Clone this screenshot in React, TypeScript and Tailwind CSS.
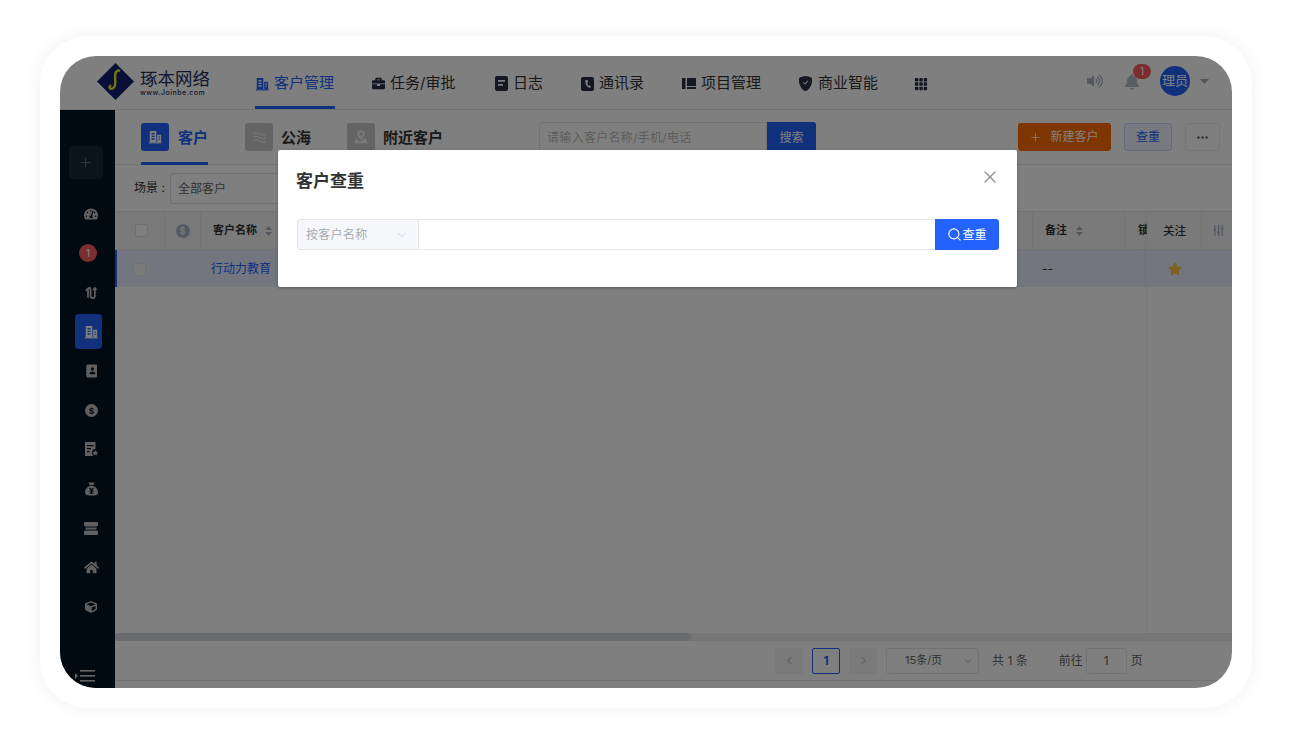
import { ReactNode } from 'react';
import { BsGrid3X3GapFill, BsShieldFillCheck } from 'react-icons/bs';
import { FaBell, FaBriefcase, FaCube, FaHome, FaStar, FaTachometerAlt, FaVolumeUp } from 'react-icons/fa';
import { ChevronDown, ChevronLeft, ChevronRight, Plus, Search, X } from 'lucide-react';

const font = { fontFamily: '"Inter", "Noto Sans CJK SC", sans-serif' };

function BuildingIcon({ size = 16, className = '' }: { size?: number; className?: string }) {
  return (
    <svg width={size} height={size} viewBox="0 0 16 16" fill="currentColor" className={className}>
      <path d="M2 1h7.500v13H2zM4 3.500v1.500h3.500V3.500zM4 6.500V8h3.500V6.500zM4 9.500V11h3.500V9.500z" fillRule="evenodd" />
      <path d="M10.500 5.500H15V14h-4.500zM11.800 7.500v1.200h2V7.500zM11.800 10v1.200h2V10z" fillRule="evenodd" />
      <rect x="1" y="14" width="14.500" height="1.300" />
    </svg>
  );
}

function LogIcon() {
  return (
    <svg width="13" height="15" viewBox="0 0 13 15" fill="currentColor">
      <path fillRule="evenodd" d="M2 0h9a2 2 0 0 1 2 2v11a2 2 0 0 1-2 2H2a2 2 0 0 1-2-2V2a2 2 0 0 1 2-2zM3 4v1.800h7V4zM3 8v1.800h5V8z" />
    </svg>
  );
}

function PhoneBookIcon() {
  return (
    <svg width="13" height="14" viewBox="0 0 13 14" fill="currentColor">
      <path fillRule="evenodd" d="M2 0h9a2 2 0 0 1 2 2v10a2 2 0 0 1-2 2H2a2 2 0 0 1-2-2V2a2 2 0 0 1 2-2zM4.500 3C3.800 6.500 5.500 10 9 11l1-1.800-1.800-1-.8.700C6.800 8 6.300 7 6.200 5.800l1-.6L6.500 3z" />
    </svg>
  );
}

function ProjectIcon() {
  return (
    <svg width="14" height="11" viewBox="0 0 14 11" fill="currentColor">
      <rect x="0" y="0" width="3.500" height="11" rx="0.500" />
      <path d="M5 0h8.200a.8.8 0 0 1 .8.800V8H5z" />
      <rect x="5" y="9" width="9" height="2" />
    </svg>
  );
}

function ExchangeIcon() {
  return (
    <svg width="12" height="13" viewBox="0 0 14 14" fill="none" stroke="currentColor" strokeWidth="2">
      <path d="M3.500 13V3a1.500 1.500 0 0 1 3 0v8a2.500 2.500 0 0 0 5 0V2" />
      <path d="M1 5l2.500-2.500M9.500 4l2-2.500L13.500 4" />
    </svg>
  );
}

function ContactBookIcon() {
  return (
    <svg width="11" height="14" viewBox="0 0 12 14" fill="currentColor">
      <path fillRule="evenodd" d="M1.500 0H11a1 1 0 0 1 1 1v12a1 1 0 0 1-1 1H1.500a1 1 0 0 1-1-1v-2H0V9.800h.5V7.600H0V6.400h.5V4.200H0V3h.5V1a1 1 0 0 1 1-1zM7 3a1.700 1.700 0 1 0 0 3.400A1.700 1.700 0 0 0 7 3zM3.800 10.500h6.400C10.200 8.700 8.800 7.500 7 7.500s-3.200 1.200-3.200 3z" />
    </svg>
  );
}

function DollarIcon() {
  return (
    <svg width="13" height="13" viewBox="0 0 13 13">
      <circle cx="6.500" cy="6.500" r="6.500" fill="currentColor" />
      <text x="6.500" y="9.700" textAnchor="middle" fontSize="9" fontWeight="700" fill="#021322" fontFamily="Liberation Sans">$</text>
    </svg>
  );
}

function FileStarIcon() {
  return (
    <svg width="13" height="14" viewBox="0 0 13 14" fill="currentColor">
      <path fillRule="evenodd" d="M0 0h10.500v7a3.500 3.500 0 0 0-3.500 3.500c0 1.300.5 2.500 1 3.500H0zM2 3v1.300h6.500V3zM2 6v1.300h4V6zM2 9v1.300h2.500V9z" />
      <path d="M10.300 8l.9 1.800 2 .3-1.400 1.400.3 2-1.800-1-1.800 1 .3-2-1.400-1.400 2-.3z" />
    </svg>
  );
}

function MoneyBagIcon() {
  return (
    <svg width="13" height="14" viewBox="0 0 13 14">
      <path fill="currentColor" d="M3.500 0.500h6L8.300 3.200H4.700zM4.500 4h4c2.500 1 4.500 3.500 4.500 6 0 2.500-2 3.500-4 3.500H4C2 13.500 0 12.500 0 10c0-2.500 2-5 4.500-6z" />
      <path stroke="#021322" strokeWidth="1.200" fill="none" d="M4.500 6l2 2 2-2M4.300 9h4.400M4.300 11h4.400M6.500 8v4" />
    </svg>
  );
}

function TicketStackIcon() {
  return (
    <svg width="14" height="13" viewBox="0 0 14 13" fill="currentColor">
      <path d="M1 0h12a1 1 0 0 1 1 1v2.500a1.200 1.200 0 0 0-1 .9H1a1.200 1.200 0 0 0-1-.9V1a1 1 0 0 1 1-1z" />
      <rect x="1.600" y="5.500" width="10.800" height="2" />
      <path d="M1 13h12a1 1 0 0 0 1-1V9.500a1.200 1.200 0 0 1-1-.9H1a1.200 1.200 0 0 1-1 .9V12a1 1 0 0 0 1 1z" />
    </svg>
  );
}

function CollapseIcon() {
  return (
    <svg width="20" height="14" viewBox="0 0 20 14" fill="currentColor">
      <path d="M0 4l3 3-3 3z" />
      <rect x="5" y="1" width="15" height="1.600" />
      <rect x="5" y="6" width="15" height="1.600" />
      <rect x="5" y="11" width="15" height="1.600" />
    </svg>
  );
}

function SortArrows() {
  return (
    <svg width="7" height="10" viewBox="0 0 7 10" fill="#a8abb2" className="shrink-0">
      <path d="M3.500 0L7 4H0zM3.500 10L0 6h7z" />
    </svg>
  );
}

function Logo() {
  return (
    <div className="flex items-center w-[114px] ml-[37px] -mt-[2px] shrink-0">
      <svg width="37" height="37" viewBox="0 0 37 37" className="shrink-0">
        <path d="M18.500 0L37 18.500 18.500 37 0 18.500z" fill="#13206e" />
        <path d="M23 8c-3-1.500-4.500 1-4.800 4-.4 3.500.8 7-.4 11-.6 2.200-3.500 3.800-5 2-.8-1.200.3-2.500 1.400-2" fill="none" stroke="#f0ea14" strokeWidth="2.400" />
      </svg>
      <div className="ml-[6px] pt-[3px] flex flex-col text-[#23305f]">
        <span className="text-[17.500px] leading-[20px] whitespace-nowrap">琢本网络</span>
        <span className="text-[7px] leading-[8px] tracking-[0.500px] font-medium whitespace-nowrap">www.Joinbe.com</span>
      </div>
    </div>
  );
}

function NavItem({ icon, label, active, width }: { icon: ReactNode; label: string; active?: boolean; width: string }) {
  return (
    <div className={`${width} h-full flex items-center gap-[5px] text-[15px] border-b-[3px] shrink-0 pt-[5px] ${active ? 'text-[#2362fb] border-[#2362fb]' : 'text-[#333] border-transparent'}`}>
      <span className={`flex items-center ${active ? 'text-[#2362fb]' : 'text-[#2a2f45]'}`}>{icon}</span>
      <span className="whitespace-nowrap">{label}</span>
    </div>
  );
}

function TopBar() {
  return (
    <div className="h-[54px] bg-white border-b border-[#e6e6e6] flex items-stretch shrink-0">
      <Logo />
      <div className="flex h-full ml-[44px] w-[700px]">
        <div className="w-[117px] pr-[22px] shrink-0 h-full">
          <NavItem icon={<BuildingIcon size={14} />} label="客户管理" active width="w-[80px]" />
        </div>
        <div className="w-[123px] shrink-0 h-full">
          <NavItem icon={<FaBriefcase size={13} />} label="任务/审批" width="w-[86px]" />
        </div>
        <div className="w-[86px] shrink-0 h-full">
          <NavItem icon={<LogIcon />} label="日志" width="w-[50px]" />
        </div>
        <div className="w-[101px] shrink-0 h-full">
          <NavItem icon={<PhoneBookIcon />} label="通讯录" width="w-[66px]" />
        </div>
        <div className="w-[116px] shrink-0 h-full">
          <NavItem icon={<ProjectIcon />} label="项目管理" width="w-[80px]" />
        </div>
        <div className="w-[116px] shrink-0 h-full">
          <NavItem icon={<BsShieldFillCheck size={15} />} label="商业智能" width="w-[82px]" />
        </div>
        <div className="h-full flex items-center pt-[3px] text-[#2a2f45]">
          <BsGrid3X3GapFill size={14} />
        </div>
      </div>
      <div className="ml-auto flex items-center pr-[23px] pb-[3px]">
        <FaVolumeUp size={16} className="text-[#aab2c0]" />
        <div className="relative ml-[21px] mt-[2px]">
          <FaBell size={16} className="text-[#b4bac6]" />
          <span className="absolute -top-[10px] left-[9px] w-[18px] h-[15px] rounded-full bg-[#f95a5a] text-white text-[10px] leading-[15px] text-center">1</span>
        </div>
        <div className="ml-[20px] w-[30px] h-[30px] rounded-full bg-[#2362fb] text-white text-[13px] flex items-center justify-center overflow-hidden whitespace-nowrap">理员</div>
        <svg width="9" height="5" viewBox="0 0 9 5" className="ml-[10px] text-[#aaa]" fill="currentColor"><path d="M0 0h9L4.500 5z" /></svg>
      </div>
    </div>
  );
}

function Sidebar() {
  const items: ReactNode[] = [
    <span className="block pl-[7px]"><FaTachometerAlt size={14} /></span>,
    <span className="w-[18px] h-[18px] ml-[1px] rounded-full bg-[#f95a5a] text-white text-[10px] leading-[18px] text-center block">1</span>,
    <span className="block pl-[7px]"><ExchangeIcon /></span>,
    <div className="w-[27px] h-[35px] ml-[1px] rounded-[4px] bg-[#2362fb] text-white flex items-center justify-center pl-[5px]"><BuildingIcon size={14} /></div>,
    <span className="block pl-[7px]"><ContactBookIcon /></span>,
    <span className="block pl-[7px]"><DollarIcon /></span>,
    <span className="block pl-[7px]"><FileStarIcon /></span>,
    <span className="block pl-[7px]"><MoneyBagIcon /></span>,
    <span className="block pl-[7px]"><TicketStackIcon /></span>,
    <span className="block pl-[7px]"><FaHome size={15} /></span>,
    <span className="block pl-[7px]"><FaCube size={12} /></span>,
  ];
  return (
    <div className="w-[55px] shrink-0 bg-[#021322] flex flex-col items-center relative">
      <div className="mt-[36px] -ml-[4px] w-[34px] h-[33px] rounded-[4px] bg-[#16283a] text-[#6c7682] flex items-center justify-center">
        <Plus size={15} strokeWidth={1.500} />
      </div>
      <div className="mt-[15px] flex flex-col items-center text-[#c0c0c0]">
        {items.map((item, i) => (
          <div key={i} className="h-[39.300px] flex items-center justify-center">{item}</div>
        ))}
      </div>
      <div className="mt-auto mb-[5px] -ml-[5px] text-[#c3c8ce]">
        <CollapseIcon />
      </div>
    </div>
  );
}

function Tab({ icon, label, active, iconBg }: { icon: ReactNode; label: string; active?: boolean; iconBg: string }) {
  return (
    <div className={`h-[55px] flex items-start pt-[13px] border-b-[3px] ${active ? 'gap-[9px] border-[#2362fb] text-[#2362fb] w-[67px]' : 'gap-[8px] border-transparent text-[#333]'}`}>
      <div className={`w-[28px] h-[28px] rounded-[3px] ${iconBg} text-white flex items-center justify-center shrink-0`}>{icon}</div>
      <span className="text-[15px] leading-[30px] font-semibold whitespace-nowrap">{label}</span>
    </div>
  );
}

function Toolbar() {
  return (
    <div className="h-[55px] shrink-0 border-b border-[#e6e6e6] flex pl-[26px] pr-[12px] bg-white">
      <div className="flex gap-[36px]">
        <Tab icon={<BuildingIcon size={14} />} label="客户" active iconBg="bg-[#2362fb]" />
        <div className="ml-[1px]">
          <Tab
            label="公海"
            iconBg="bg-[#c8c8c8]"
            icon={
              <svg width="15" height="11" viewBox="0 0 15 11" fill="none" stroke="currentColor" strokeWidth="1.200" className="opacity-70">
                <path d="M1 2c2-1.500 4-1.500 6.500 0s4.500 1.500 6.500 0M1 5.500c2-1.500 4-1.500 6.500 0s4.500 1.500 6.500 0M1 9c2-1.500 4-1.500 6.500 0s4.500 1.500 6.500 0" />
              </svg>
            }
          />
        </div>
        <Tab
          label="附近客户"
          iconBg="bg-[#c8c8c8]"
          icon={
            <svg width="16" height="16" viewBox="0 0 16 16" fill="currentColor" className="opacity-70">
              <path fillRule="evenodd" d="M8 1a4 4 0 0 0-4 4c0 2.500 4 6 4 6s4-3.500 4-6a4 4 0 0 0-4-4zm0 2.500a1.500 1.500 0 1 1 0 3 1.500 1.500 0 0 1 0-3z" />
              <path d="M3 9.500l-2 5h14l-2-5-1.500 0-4.500 3-4.500-3z" />
            </svg>
          }
        />
      </div>
      <div className="ml-[96px] mt-[12px] flex h-[30px]">
        <div className="w-[228px] border border-[#e6e6e6] rounded-l-[3px] text-[12px] text-[#bbb] leading-[29px] px-[7px] tracking-[0.300px]">请输入客户名称/手机/电话</div>
        <div className="w-[49px] bg-[#2362fb] rounded-r-[3px] text-white text-[12px] flex items-center justify-center pt-[2px]">搜索</div>
      </div>
      <div className="ml-auto mt-[13px] flex h-[28px] gap-[13px]">
        <div className="w-[93px] rounded-[3px] bg-[#ff6a00] text-white text-[12px] flex items-center justify-center gap-[8px] pr-[1px]">
          <Plus size={13} strokeWidth={1.500} />
          <span>新建客户</span>
        </div>
        <div className="w-[48px] rounded-[3px] border border-[#c6d5fb] bg-[#f0f4ff] text-[#2362fb] text-[12px] flex items-center justify-center">查重</div>
        <div className="w-[35px] rounded-[3px] border border-[#ececec] flex items-center justify-center text-[#555]">
          <svg width="11" height="3" viewBox="0 0 11 3" fill="currentColor"><circle cx="1.500" cy="1.500" r="1.200" /><circle cx="5.500" cy="1.500" r="1.200" /><circle cx="9.500" cy="1.500" r="1.200" /></svg>
        </div>
      </div>
    </div>
  );
}

function Filters() {
  return (
    <div className="h-[47px] shrink-0 flex items-center pl-[19px] bg-white border-b border-[#e6e6e6]">
      <span className="text-[12px] text-[#333] w-[36px] whitespace-nowrap">场景 :</span>
      <div className="w-[120px] h-[31px] border border-[#dcdfe6] rounded-[3px] text-[12px] text-[#666] leading-[29px] pl-[7px]">全部客户</div>
    </div>
  );
}

function Table() {
  return (
    <div className="flex-1 flex min-h-0 bg-white">
      <div className="flex-1 min-w-0 overflow-hidden">
        <div className="h-[38px] flex items-center bg-[#f5f5f5] border-b border-[#e6e6e6] text-[11px] font-bold text-[#333]">
          <div className="w-[50px] h-full border-r border-[#e6e6e6] flex items-center pl-[20px] shrink-0">
            <div className="w-[13px] h-[13px] border border-[#dcdfe6] bg-white rounded-[2px]" />
          </div>
          <div className="w-[36px] h-full border-r border-[#e6e6e6] flex items-center justify-center shrink-0">
            <span className="w-[14px] h-[14px] rounded-full bg-[#a9b4c8] text-white text-[9px] leading-[14px] text-center font-normal">$</span>
          </div>
          <div className="w-[831px] h-full flex items-center gap-[8px] pl-[12px] shrink-0 whitespace-nowrap">
            客户名称 <SortArrows />
          </div>
          <div className="w-[93px] h-full border-x border-[#e6e6e6] flex items-center gap-[9px] pl-[12px] shrink-0 whitespace-nowrap">
            备注 <SortArrows />
          </div>
          <div className="pl-[13px] shrink-0 whitespace-nowrap">锁定状态</div>
        </div>
        <div className="h-[37px] flex items-center bg-[#e7edff] border-l-2 border-[#2362fb] text-[12px] pt-[1px]">
          <div className="w-[44px] flex justify-center shrink-0">
            <div className="w-[13px] h-[13px] border border-[#e4e4e4] bg-[#f4f4f4] rounded-[2px]" />
          </div>
          <div className="w-[40px] shrink-0" />
          <div className="w-[831px] pl-[10px] text-[#2362fb] shrink-0">行动力教育</div>
          <div className="pl-[10px] text-[#333]">--</div>
        </div>
      </div>
      <div className="w-[85px] shrink-0 border-l border-[#eeeeee] shadow-[-2px_0_4px_rgba(0,0,0,0.04)] relative bg-white">
        <div className="h-[38px] flex bg-[#f5f5f5] border-b border-[#e6e6e6]">
          <div className="w-[54px] h-full border-r border-[#e6e6e6] flex items-center justify-center text-[11.500px] font-medium text-[#333] pt-[2px]">关注</div>
          <div className="flex-1 flex items-center justify-center pl-[2px]">
            <svg width="11" height="11" viewBox="0 0 11 12" fill="#a9b4c8"><path d="M.8 0h1.400v12H.8zM4.800 0h1.400v12H4.800zM8.800 0h1.400v12H8.800z" /><path d="M0 4h3v2H0zM4 7h3v2H4zM8 3h3v2H8z" /></svg>
          </div>
        </div>
        <div className="h-[37px] bg-[#e7edff] flex">
          <div className="w-[53px] flex items-center justify-center">
            <FaStar size={14} className="text-[#fac23d]" />
          </div>
        </div>
      </div>
    </div>
  );
}

function Pagination() {
  return (
    <div className="h-[40px] shrink-0 flex items-center bg-white border-b border-[#e6e6e6] text-[12px] text-[#666] pl-[660px]">
      <div className="w-[28px] h-[26px] bg-[#f4f4f5] rounded-[2px] flex items-center justify-center text-[#c0c4cc]"><ChevronLeft size={13} /></div>
      <div className="ml-[9px] w-[28px] h-[26px] border border-[#2362fb] rounded-[2px] flex items-center justify-center text-[#2362fb] font-bold">1</div>
      <div className="ml-[9px] w-[28px] h-[26px] bg-[#f4f4f5] rounded-[2px] flex items-center justify-center text-[#c0c4cc]"><ChevronRight size={13} /></div>
      <div className="ml-[9px] w-[93px] h-[26px] border border-[#e4e7ed] rounded-[3px] flex items-center pl-[18px] text-[11px]">
        15条/页
        <ChevronDown size={12} className="ml-auto mr-[4px] text-[#c0c4cc]" />
      </div>
      <span className="ml-[13px] whitespace-nowrap">共 1 条</span>
      <span className="ml-[31px] whitespace-nowrap">前往</span>
      <div className="ml-[3px] w-[41px] h-[26px] border border-[#e4e7ed] rounded-[3px] flex items-center justify-center">1</div>
      <span className="ml-[4px]">页</span>
    </div>
  );
}

function Modal() {
  return (
    <div className="absolute left-[218px] top-[94px] w-[739px] h-[137px] bg-white rounded-[2px] shadow-[0_1px_3px_rgba(0,0,0,0.3)] pl-[18px] pr-[18px]">
      <div className="h-[69px] flex items-start pt-[19px] justify-between">
        <span className="text-[17px] leading-[24px] font-semibold text-[#333]">客户查重</span>
        <X size={20} strokeWidth={1.700} className="text-[#909399] mt-[-2px] -mr-[1px]" />
      </div>
      <div className="flex h-[31px] ml-[1px]">
        <div className="w-[122px] shrink-0 border border-[#e6e6e6] rounded-l-[3px] bg-[#f5f7fa] flex items-center pl-[8px] pr-[9px] text-[12px] text-[#a8abb2] tracking-[0.300px]">
          按客户名称
          <ChevronDown size={14} strokeWidth={1.200} className="ml-auto text-[#c0c4cc]" />
        </div>
        <div className="flex-1 border-y border-[#e6e6e6]" />
        <div className="w-[64px] shrink-0 bg-[#2362fb] rounded-r-[3px] text-white text-[12px] flex items-center justify-center">
          <Search size={15} strokeWidth={1.800} />
          <span>查重</span>
        </div>
      </div>
    </div>
  );
}

export default function App() {
  return (
    <div style={font} className="w-[1292px] h-[752px] bg-white pt-[36px] pl-[40px] overflow-hidden">
      <div className="w-[1212px] h-[672px] bg-white rounded-[48px] shadow-[0_0_20px_rgba(0,0,0,0.06)] p-[20px]">
        <div className="relative w-[1172px] h-[632px] rounded-[36px] overflow-hidden flex flex-col bg-white">
          <TopBar />
          <div className="flex-1 flex min-h-0">
            <Sidebar />
            <div className="flex-1 min-w-0 flex flex-col">
              <Toolbar />
              <Filters />
              <Table />
              <div className="h-[8px] shrink-0 bg-[#ededed]">
                <div className="w-[576px] h-full bg-[#d3d7dc] rounded-[4px]" />
              </div>
              <Pagination />
              <div className="h-[7px] shrink-0 bg-white" />
            </div>
          </div>
          <div className="absolute inset-0 bg-black/50" />
          <Modal />
        </div>
      </div>
    </div>
  );
}
